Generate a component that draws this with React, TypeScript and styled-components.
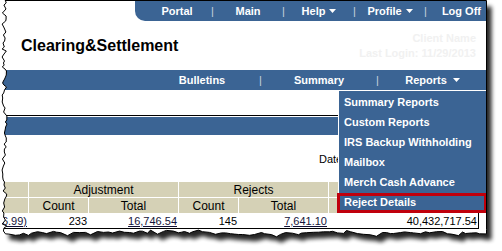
import React from "react";
import styled, { createGlobalStyle, css } from "styled-components";

const BLUE = "#3b6494";
const TAN = "#d5d1b6";

const GlobalStyle = createGlobalStyle`
  html, body { margin: 0; padding: 0; background: #fff; }
  body { font-family: "Liberation Sans", Arial, sans-serif; }
  * { box-sizing: border-box; }
`;

const Stage = styled.div`
  position: relative;
  width: 502px;
  height: 251px;
  overflow: hidden;
  background: #fff;
`;

const Sheet = styled.div`
  width: 486px;
  display: flex;
  flex-direction: column;
`;

const TopRow = styled.div`
  display: flex;
  justify-content: flex-end;
`;

const UtilityNav = styled.nav`
  width: 351px;
  height: 21px;
  background: ${BLUE};
  border-bottom-left-radius: 10px;
  display: flex;
  align-items: stretch;
  padding-left: 8px;
`;

const NavCell = styled.a<{ $w: number; $last?: boolean }>`
  width: ${(p) => p.$w}px;
  display: flex;
  align-items: center;
  justify-content: center;
  color: #fff;
  font-size: 11px;
  font-weight: bold;
  text-decoration: none;
  white-space: nowrap;
  position: relative;
  ${(p) =>
    p.$last &&
    css`
      flex: 1;
      width: auto;
    `}
`;

const EndCell = styled(NavCell)`
  justify-content: flex-end;
  padding-right: 5px;
`;

const Sep = styled.span`
  width: 3px;
  display: flex;
  align-items: center;
  justify-content: center;
  color: #c6d1df;
  font-size: 11px;
`;

const CaretSvg = styled.svg<{ $gap: number }>`
  margin-left: ${(p) => p.$gap}px;
  display: block;
`;

const Caret = ({ gap }: { gap: number }) => (
  <CaretSvg $gap={gap} width="7" height="4" viewBox="0 0 7 4">
    <polygon points="0,0 7,0 3.5,4" fill="#fff" />
  </CaretSvg>
);

const Header = styled.header`
  height: 49px;
  display: flex;
  align-items: center;
  justify-content: space-between;
  padding: 0 10px 0 21px;
`;

const Title = styled.h1`
  margin: 0;
  font-size: 16px;
  font-weight: bold;
  color: #000;
`;

const UserInfo = styled.div`
  text-align: right;
  font-size: 11px;
  font-weight: bold;
  line-height: 15px;
  color: #f1f1f1;
`;

const MainNav = styled.nav`
  height: 20px;
  background: ${BLUE};
  display: flex;
  align-items: stretch;
  padding-left: 145px;
`;

const SectionBar = styled.div`
  margin-top: 25px;
  height: 20px;
  border-top: 1px solid #000;
  padding-top: 1px;
  background: ${BLUE};
  background-clip: content-box;
`;

const DateRow = styled.div`
  margin-top: 17px;
  padding-left: 319px;
  font-size: 11px;
  line-height: 14px;
  color: #000;
  white-space: nowrap;
`;

const COLS = "28px 59px 89px 59px 89px 149px";

const HeadGrid = styled.div`
  margin-top: 16px;
  display: grid;
  grid-template-columns: ${COLS};
  grid-auto-rows: 15px;
  gap: 1px;
  width: 478px;
`;

const HeadCell = styled.div<{ $span?: number }>`
  grid-column: span ${(p) => p.$span ?? 1};
  background: ${TAN};
  display: flex;
  align-items: center;
  justify-content: center;
  font-size: 12px;
  color: #000;
  white-space: nowrap;
`;

const DataRow = styled.div`
  display: grid;
  grid-template-columns: ${COLS};
  column-gap: 1px;
  width: 479px;
  height: 16px;
  border-right: 1px solid #000;
  border-bottom: 1px solid #000;
`;

const DataCell = styled.div`
  display: flex;
  align-items: center;
  justify-content: flex-end;
  padding-right: 1px;
  font-size: 11px;
  color: #000;
  white-space: nowrap;
`;

const Link = styled.a`
  color: #14143a;
  text-decoration: underline;
`;

const Dropdown = styled.ul`
  position: absolute;
  top: 100%;
  right: 0;
  width: 148px;
  margin: 0;
  padding: 1px 0 0;
  list-style: none;
  background: ${BLUE};
  border-top: 1px solid #fff;
  border-left: 1px solid #fff;
  z-index: 5;
`;

const MenuItem = styled.li<{ $flagged?: boolean }>`
  position: relative;
  height: 20px;
  display: flex;
  align-items: center;
  padding-left: 5px;
  color: #fff;
  font-size: 11px;
  font-weight: bold;
  white-space: nowrap;
  ${(p) =>
    p.$flagged &&
    css`
      &::after {
        content: "";
        position: absolute;
        top: 1px;
        bottom: -1px;
        left: -2px;
        right: -1px;
        border: 3px solid #c0000c;
      }
    `}
`;

const Overlay = styled.svg`
  position: absolute;
  left: 0;
  top: 0;
  pointer-events: none;
  z-index: 10;
`;

function rng(seed: number) {
  let s = seed;
  return () => {
    s = (s * 1103515245 + 12345) & 0x7fffffff;
    return s / 0x7fffffff;
  };
}

function sheetOutline(): string {
  const r = rng(11);
  const left: [number, number][] = [];
  for (let y = 0; y <= 232; y += 2 + Math.floor(r() * 3)) {
    left.push([2 + r() * 5, y]);
  }
  const bottom: [number, number][] = [];
  let wave = 0;
  for (let x = 486.5; x >= 5; x -= 3 + Math.floor(r() * 5)) {
    wave += (r() - 0.5) * 1.6;
    wave = Math.max(-1.5, Math.min(1.5, wave));
    bottom.push([x, 231.5 + wave + r() * 2.5 + (r() < 0.15 ? 2 : 0)]);
  }
  let d = `M${left[0][0].toFixed(1)} 0.5 L486.5 0.5 L486.5 229.5`;
  for (const [x, y] of bottom) d += ` L${x.toFixed(1)} ${y.toFixed(1)}`;
  for (let i = left.length - 1; i >= 0; i--) d += ` L${left[i][0].toFixed(1)} ${left[i][1].toFixed(1)}`;
  return d + " Z";
}

const TornEdges = () => {
  const poly = sheetOutline();
  return (
    <Overlay width="502" height="251" viewBox="0 0 502 251">
      <defs>
        <filter id="blur" x="-10%" y="-10%" width="120%" height="120%">
          <feGaussianBlur stdDeviation="2" />
        </filter>
        <mask id="outside" maskUnits="userSpaceOnUse" x="0" y="0" width="502" height="251">
          <rect x="0" y="0" width="502" height="251" fill="#fff" />
          <path d={poly} fill="#000" />
        </mask>
      </defs>
      <path d={`M0 0 H502 V251 H0 Z ${poly}`} fill="#fff" fillRule="evenodd" />
      <g mask="url(#outside)">
        <path d={poly} transform="translate(5,6)" fill="#000" opacity="0.85" filter="url(#blur)" />
      </g>
      <path d={poly} fill="none" stroke="#000" strokeWidth="1" />
    </Overlay>
  );
};

const topLinks = [
  { label: "Portal" },
  { label: "Main" },
  { label: "Help", caret: true },
  { label: "Profile", caret: true },
];

const menu = [
  "Summary Reports",
  "Custom Reports",
  "IRS Backup Withholding",
  "Mailbox",
  "Merch Cash Advance",
  "Reject Details",
];

export default function App() {
  return (
    <>
      <GlobalStyle />
      <Stage>
        <Sheet>
          <TopRow>
            <UtilityNav>
              {topLinks.map((l) => (
                <React.Fragment key={l.label}>
                  <NavCell $w={68}>
                    {l.label}
                    {l.caret && <Caret gap={4} />}
                  </NavCell>
                  <Sep>|</Sep>
                </React.Fragment>
              ))}
              <EndCell $w={0} $last>
                Log Off
              </EndCell>
            </UtilityNav>
          </TopRow>

          <Header>
            <Title>Clearing&amp;Settlement</Title>
            <UserInfo>
              Client Name
              <br />
              Last Login: 11/29/2013
            </UserInfo>
          </Header>

          <MainNav>
            <NavCell $w={114}>Bulletins</NavCell>
            <Sep>|</Sep>
            <NavCell $w={114}>Summary</NavCell>
            <Sep>|</Sep>
            <NavCell $w={0} $last>
              Reports
              <Caret gap={6} />
              <Dropdown>
                {menu.map((m, i) => (
                  <MenuItem key={m} $flagged={i === menu.length - 1}>
                    {m}
                  </MenuItem>
                ))}
              </Dropdown>
            </NavCell>
          </MainNav>

          <SectionBar />

          <DateRow>Date Range: 11/01/2013 - 11/29/2013</DateRow>

          <HeadGrid>
            <HeadCell />
            <HeadCell $span={2}>Adjustment</HeadCell>
            <HeadCell $span={2}>Rejects</HeadCell>
            <HeadCell />
            <HeadCell />
            <HeadCell>Count</HeadCell>
            <HeadCell>Total</HeadCell>
            <HeadCell>Count</HeadCell>
            <HeadCell>Total</HeadCell>
            <HeadCell />
          </HeadGrid>
          <DataRow>
            <DataCell>
              <Link>(1,806.99)</Link>
            </DataCell>
            <DataCell>233</DataCell>
            <DataCell>
              <Link>16,746.54</Link>
            </DataCell>
            <DataCell>145</DataCell>
            <DataCell>
              <Link>7,641.10</Link>
            </DataCell>
            <DataCell>40,432,717.54</DataCell>
          </DataRow>
        </Sheet>
        <TornEdges />
      </Stage>
    </>
  );
}
